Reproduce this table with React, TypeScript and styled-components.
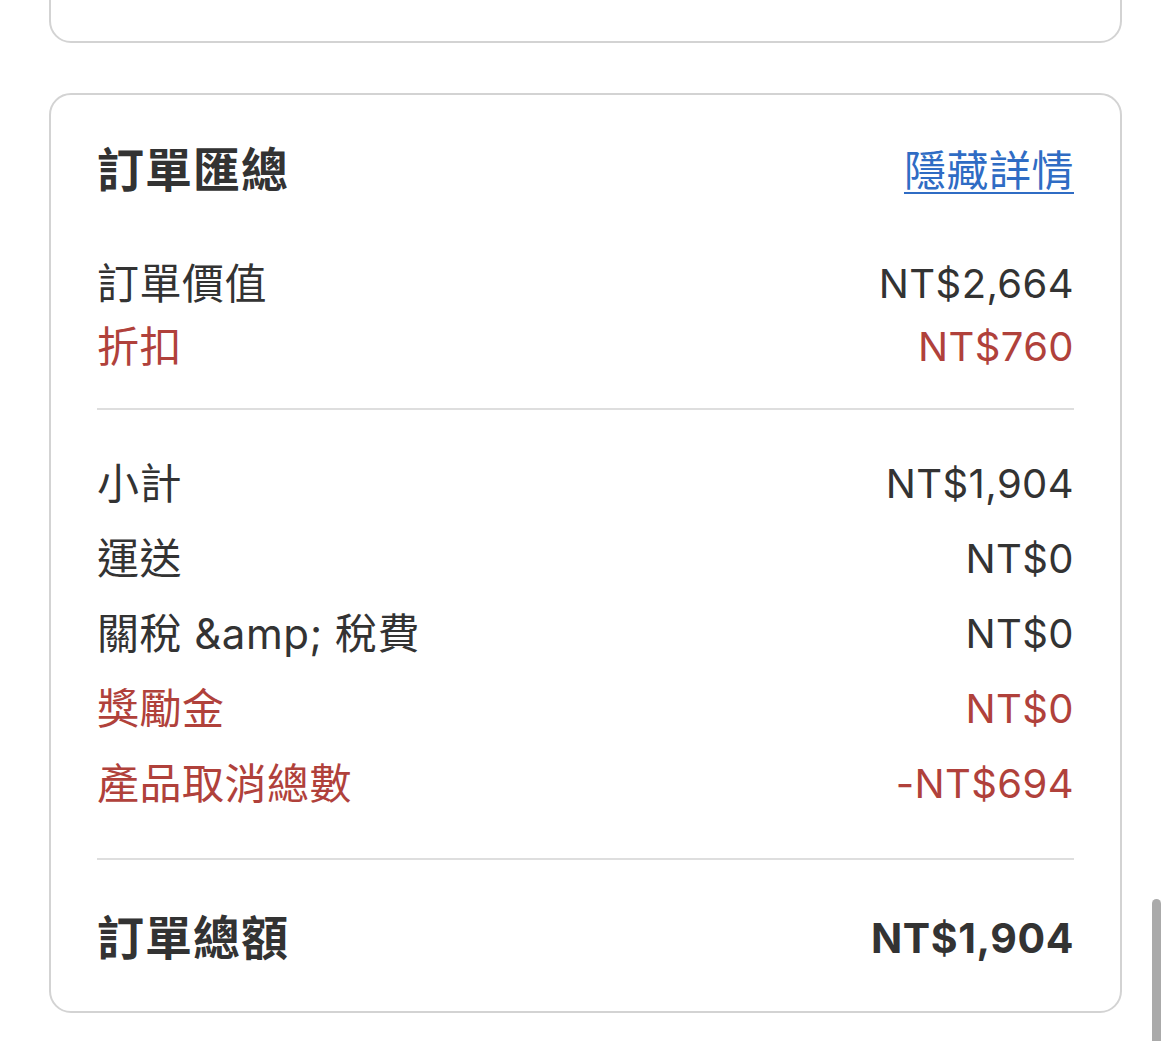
import React from "react";
import styled, { createGlobalStyle } from "styled-components";

const GlobalStyle = createGlobalStyle`
  html, body {
    margin: 0;
    padding: 0;
    background: #ffffff;
    overflow: hidden;
  }
  body {
    font-family: "Inter", "Noto Sans CJK TC", "Noto Sans", sans-serif;
    color: #333333;
  }
`;

const Page = styled.div`
  display: flex;
  flex-direction: column;
  gap: 50px;
  padding: 0 48px 0 49px;
  width: 1170px;
  box-sizing: border-box;
`;

const Card = styled.section<{ $clipped?: boolean }>`
  border: 2px solid #d3d3d3;
  border-radius: 22px;
  background: #ffffff;
  box-sizing: border-box;
  ${(p) => (p.$clipped ? "height: 104px; margin-top: -61px;" : "")}
`;

const SummaryBody = styled.div`
  display: flex;
  flex-direction: column;
  padding: 40px 46px 36px 46px;
`;

const HeaderRow = styled.div`
  display: flex;
  justify-content: space-between;
  align-items: center;
  height: 68px;
`;

const Title = styled.h2`
  margin: 0;
  padding-bottom: 6px;
  font-size: 47px;
  font-weight: 700;
  color: #333333;
  letter-spacing: 1px;
`;

const ToggleLink = styled.a`
  padding-bottom: 4px;
  font-size: 42px;
  letter-spacing: 0.5px;
  color: #2f6cc4;
  text-decoration: underline;
  text-decoration-thickness: 2px;
  text-underline-offset: 6px;
  cursor: pointer;
`;

const Group = styled.div<{ $rowHeight: number; $top: number; $bottom: number }>`
  display: flex;
  flex-direction: column;
  padding-top: ${(p) => p.$top}px;
  padding-bottom: ${(p) => p.$bottom}px;
  & > div {
    height: ${(p) => p.$rowHeight}px;
  }
`;

const Row = styled.div<{ $tone?: "red" | "dark" }>`
  display: flex;
  justify-content: space-between;
  align-items: center;
  font-size: 40px;
  color: ${(p) => (p.$tone === "red" ? "#b0413b" : "#333333")};
`;

const Label = styled.span`
  padding-bottom: 7px;
  font-size: 42px;
  letter-spacing: 0.5px;
`;

const Amount = styled.span`
  font-size: 40px;
  letter-spacing: 0.4px;
`;

const Divider = styled.hr`
  margin: 0;
  border: none;
  height: 2px;
  background: #dedede;
`;

const TotalRow = styled.div`
  display: flex;
  justify-content: space-between;
  align-items: center;
  height: 75px;
  margin-top: 40px;
  font-weight: 700;
`;

const TotalLabel = styled.span`
  padding-bottom: 6px;
  font-size: 47px;
  letter-spacing: 1px;
`;

const TotalAmount = styled.span`
  font-size: 41px;
  letter-spacing: 0.6px;
`;

const ScrollThumb = styled.div`
  position: fixed;
  left: 1152px;
  top: 899px;
  width: 9px;
  height: 160px;
  border-radius: 5px;
  background: #aaaaaa;
`;

type Line = { label: string; amount: string; red?: boolean };

const firstGroup: Line[] = [
  { label: "訂單價值", amount: "NT$2,664" },
  { label: "折扣", amount: "NT$760", red: true },
];

const secondGroup: Line[] = [
  { label: "小計", amount: "NT$1,904" },
  { label: "運送", amount: "NT$0" },
  { label: "關稅 &amp; 稅費", amount: "NT$0" },
  { label: "獎勵金", amount: "NT$0", red: true },
  { label: "產品取消總數", amount: "-NT$694", red: true },
];

export default function App() {
  return (
    <>
      <GlobalStyle />
      <Page>
        <Card $clipped />
        <Card>
          <SummaryBody>
            <HeaderRow>
              <Title>訂單匯總</Title>
              <ToggleLink>隱藏詳情</ToggleLink>
            </HeaderRow>
            <Group $rowHeight={63} $top={49} $bottom={30}>
              {firstGroup.map((l) => (
                <Row key={l.label} $tone={l.red ? "red" : "dark"}>
                  <Label>{l.label}</Label>
                  <Amount>{l.amount}</Amount>
                </Row>
              ))}
            </Group>
            <Divider />
            <Group $rowHeight={75} $top={36} $bottom={37}>
              {secondGroup.map((l) => (
                <Row key={l.label} $tone={l.red ? "red" : "dark"}>
                  <Label>{l.label}</Label>
                  <Amount>{l.amount}</Amount>
                </Row>
              ))}
            </Group>
            <Divider />
            <TotalRow>
              <TotalLabel>訂單總額</TotalLabel>
              <TotalAmount>NT$1,904</TotalAmount>
            </TotalRow>
          </SummaryBody>
        </Card>
      </Page>
      <ScrollThumb />
    </>
  );
}
